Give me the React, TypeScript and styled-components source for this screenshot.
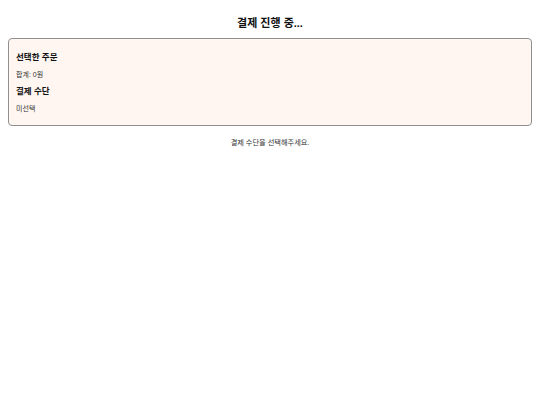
import React from "react";
import styled, { createGlobalStyle } from "styled-components";

const GlobalStyle = createGlobalStyle`
	body {
		margin: 8px;
		background: #ffffff;
		font-family: "Liberation Sans", "Noto Sans CJK KR", sans-serif;
		color: #111111;
	}
`;

const Page = styled.main`
	display: flex;
	flex-direction: column;
`;

const Title = styled.h1`
	margin: 8px 0 8px;
	font-size: 11px;
	font-weight: 700;
	text-align: center;
	line-height: 14px;
`;

const Card = styled.section`
	display: flex;
	flex-direction: column;
	gap: 6px;
	padding: 13px 7px 11px;
	background: #fff6f1;
	border: 1px solid #8f8f8f;
	border-radius: 4px;
`;

const SectionTitle = styled.h2`
	margin: 0;
	font-size: 8.5px;
	font-weight: 700;
	line-height: 11px;
`;

const Info = styled.p`
	margin: 0;
	font-size: 7px;
	line-height: 11px;
	color: #333333;
`;

const Hint = styled.p`
	margin: 12px 0 0;
	font-size: 7.2px;
	line-height: 9px;
	text-align: center;
	color: #333333;
`;

const App: React.FC = () => {
	return (
		<>
			<GlobalStyle />
			<Page>
				<Title>결제 진행 중...</Title>
				<Card>
					<SectionTitle>선택한 주문</SectionTitle>
					<Info>합계: 0원</Info>
					<SectionTitle>결제 수단</SectionTitle>
					<Info>미선택</Info>
				</Card>
				<Hint>결제 수단을 선택해주세요.</Hint>
			</Page>
		</>
	);
};

export default App;
